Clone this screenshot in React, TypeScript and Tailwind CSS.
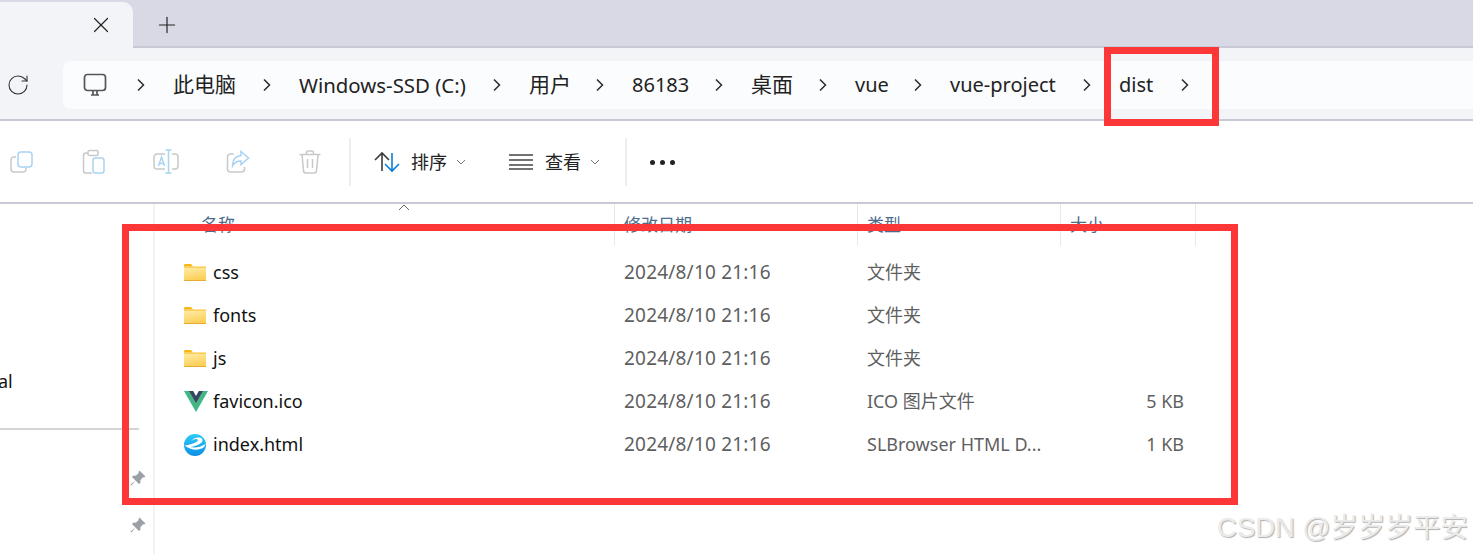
import { Plus, RotateCw, X } from 'lucide-react'

const ui = '[font-family:"Noto_Sans","Noto_Sans_CJK_SC",sans-serif]'

const crumbs = [
  { label: '此电脑', width: 'w-[116px]', size: 'text-[21px]' },
  { label: 'Windows-SSD (C:)', width: 'w-[220px]', size: 'text-[20.4px]' },
  { label: '用户', width: 'w-[93px]', size: 'text-[21px]' },
  { label: '86183', width: 'w-[109px]', size: 'text-[20px]' },
  { label: '桌面', width: 'w-[94px]', size: 'text-[21px]' },
  { label: 'vue', width: 'w-[85px]', size: 'text-[20px]' },
  { label: 'vue-project', width: 'w-[159px]', size: 'text-[20px]' },
  { label: 'dist', width: 'w-[88px]', size: 'text-[20px]' },
]

const files = [
  { name: 'css', icon: 'folder', type: '文件夹', size: '' },
  { name: 'fonts', icon: 'folder', type: '文件夹', size: '' },
  { name: 'js', icon: 'folder', type: '文件夹', size: '' },
  { name: 'favicon.ico', icon: 'vue', type: 'ICO 图片文件', size: '5 KB' },
  { name: 'index.html', icon: 'browser', type: 'SLBrowser HTML D...', size: '1 KB' },
]

function Chevron() {
  return (
    <svg width="10" height="14" viewBox="0 0 10 14" fill="none" stroke="#2b2b2b" strokeWidth="1.5">
      <path d="M2 1.5 7.5 7 2 12.5" />
    </svg>
  )
}

function SmallCaret() {
  return (
    <svg width="10" height="6" viewBox="0 0 10 6" fill="none" stroke="#777" strokeWidth="1">
      <path d="M1 1l4 4 4-4" />
    </svg>
  )
}

function PcIcon() {
  return (
    <svg width="24" height="24" viewBox="0 0 24 24" fill="none" stroke="#555" strokeWidth="1.7">
      <rect x="1.5" y="1.5" width="21" height="16" rx="3" />
      <path d="M8 22h8M10 18v4M14 18v4" />
    </svg>
  )
}

function CopyIcon() {
  return (
    <svg width="24" height="24" viewBox="0 0 24 24" fill="none" strokeWidth="1.5">
      <path d="M6 7H4a3 3 0 0 0-3 3v9a3 3 0 0 0 3 3h9a3 3 0 0 0 3-3v-1" stroke="#c9c9c9" />
      <rect x="8" y="2" width="14" height="15" rx="3" stroke="#a9d3f3" />
    </svg>
  )
}

function PasteIcon() {
  return (
    <svg width="24" height="26" viewBox="0 0 24 26" fill="none" strokeWidth="1.5">
      <path d="M6 4H4a2.500 2.500 0 0 0-2.500 2.500v15A2.500 2.500 0 0 0 4 24h6M17 4h-1" stroke="#c9c9c9" />
      <rect x="6" y="1.500" width="10" height="5" rx="1.500" stroke="#c9c9c9" />
      <rect x="11" y="9" width="11" height="15" rx="2.500" stroke="#a9d3f3" />
    </svg>
  )
}

function RenameIcon() {
  return (
    <svg width="26" height="26" viewBox="0 0 26 26" fill="none" strokeWidth="1.5">
      <path d="M12 5H4a3 3 0 0 0-3 3v9a3 3 0 0 0 3 3h8M19 5h3a3 3 0 0 1 3 3v9a3 3 0 0 1-3 3h-3" stroke="#c9c9c9" />
      <path d="M12.500 1h6M15.500 1v23M12.500 24h6M5.500 17l3-9 3 9M6.500 14.500h4" stroke="#a9d3f3" />
    </svg>
  )
}

function ShareIcon() {
  return (
    <svg width="24" height="24" viewBox="0 0 24 24" fill="none" strokeWidth="1.5">
      <path d="M8 4H4.500A3 3 0 0 0 1.500 7v12a3 3 0 0 0 3 3h11a3 3 0 0 0 3-3v-2" stroke="#c9c9c9" />
      <path d="M15 1.500 22.500 8 15 14.500V11c-4 0-6.500 1.500-8.500 5 0-6 3-10 8.500-10.500z" stroke="#a9d3f3" />
    </svg>
  )
}

function TrashIcon() {
  return (
    <svg width="22" height="24" viewBox="0 0 22 24" fill="none" stroke="#c9c9c9" strokeWidth="1.5">
      <path d="M0.500 4.500h21M7.500 4.500V3a2 2 0 0 1 2-2h3a2 2 0 0 1 2 2v1.500M3 4.500l1.500 16a2.500 2.500 0 0 0 2.500 2.500h8a2.500 2.500 0 0 0 2.500-2.500l1.500-16M8.500 9v9M13.500 9v9" />
    </svg>
  )
}

function SortIcon() {
  return (
    <svg width="26" height="22" viewBox="0 0 26 22" fill="none" strokeWidth="1.6">
      <path d="M8 20V2M1 9l7-7 7 7" stroke="#3d3d3d" />
      <path d="M18 2v18M11 13l7 7 7-7" stroke="#0a7fd6" />
    </svg>
  )
}

function ViewIcon() {
  return (
    <svg width="24" height="16" viewBox="0 0 24 16" fill="none" stroke="#444" strokeWidth="1.5">
      <path d="M0 1h24M0 6h24M0 11h24M0 15h24" />
    </svg>
  )
}

function PinIcon() {
  return (
    <svg width="16" height="16" viewBox="0 0 16 16" fill="#9aa0a6">
      <path d="M9.500 0.500 15.500 6.500 14 7.500 13 7.200 10.500 10 10.300 13 9 14 5.500 10.500 1.500 15.500 0.500 14.500 5.500 10.500 2 7 3 5.700 6 5.500 8.800 3 8.500 2z" />
    </svg>
  )
}

function FolderIcon() {
  return (
    <svg width="22" height="17" viewBox="0 0 22 17">
      <defs>
        <linearGradient id="folder-body" x1="0" y1="0" x2="0.3" y2="1">
          <stop offset="0" stopColor="#ffedab" />
          <stop offset="1" stopColor="#fccf57" />
        </linearGradient>
      </defs>
      <path d="M0 1a1 1 0 0 1 1-1h6l2 2.500H0z" fill="#fbb714" />
      <path d="M0 3h22v13a1 1 0 0 1-1 1H1a1 1 0 0 1-1-1z" fill="url(#folder-body)" />
      <path d="M0 2.500h22v1.200H0z" fill="#f8c538" />
      <path d="M0 16h22v1H0z" fill="#e8ac34" />
    </svg>
  )
}

function VueIcon() {
  return (
    <svg width="24" height="21" viewBox="0 0 24 21">
      <path d="M0 0h4.800L12 12.500 19.200 0H24L12 21z" fill="#41b883" />
      <path d="M4.800 0h4.400L12 5l2.800-5h4.400L12 12.500z" fill="#35495e" />
    </svg>
  )
}

function BrowserIcon() {
  return (
    <svg width="22" height="22" viewBox="0 0 22 22">
      <defs>
        <linearGradient id="browser-ball" x1="0" y1="0" x2="0" y2="1">
          <stop offset="0" stopColor="#2ccaf8" />
          <stop offset="1" stopColor="#0d8fe6" />
        </linearGradient>
      </defs>
      <circle cx="11" cy="11" r="11" fill="url(#browser-ball)" />
      <path d="M0.500 11.500C5 11 10 9.500 13 7.500c1.500-1 1-2.500-1-2.500-2 0-3.500 1-5 2.500 2-3 5-4.500 8.500-4 3 .5 4 3 2 5C15 11 10 12.500 6.500 13c4 1 9.500 .5 15-3-.5 1.500-1 2.500-2 3.500-5 3-11 3.500-19-2z" fill="#fff" />
    </svg>
  )
}

function FileIcon({ kind }: { kind: string }) {
  if (kind === 'vue') return <VueIcon />
  if (kind === 'browser') return <BrowserIcon />
  return <FolderIcon />
}

export default function App() {
  return (
    <div className={`relative h-[554px] w-[1473px] overflow-hidden bg-white ${ui}`}>
      {/* Вкладки */}
      <div className="flex h-[48px] items-stretch border-b-2 border-[#c9c9d6] bg-[#d8d9e5]">
        <div className="mt-[2px] -mb-[2px] flex w-[133px] items-center justify-end rounded-tr-[10px] bg-[#f3f4f8] pr-[19px]">
          <X size={26} strokeWidth={1.1} color="#222" />
        </div>
        <div className="ml-[21px] flex items-center pt-[4px]">
          <Plus size={26} strokeWidth={1.1} color="#222" />
        </div>
      </div>

      {/* Адресная строка */}
      <div className="flex h-[73px] items-center border-b-2 border-[#c9c9d6] bg-[#f3f4f8] pt-[3px]">
        <div className="ml-[6px] w-[57px]">
          <RotateCw size={24} strokeWidth={1.1} color="#333" />
        </div>
        <div className="flex h-[48px] w-[1410px] items-center rounded-l-[8px] bg-[#fbfcfe] pl-[20px] text-[#222]">
          <div className="w-[53px]">
            <PcIcon />
          </div>
          <Chevron />
          {crumbs.map((crumb) => (
            <div key={crumb.label} className="flex items-center">
              <span className={`${crumb.width} ${crumb.size} whitespace-nowrap pl-[27px]`}>{crumb.label}</span>
              <Chevron />
            </div>
          ))}
        </div>
      </div>

      {/* Панель инструментов */}
      <div className="flex h-[83px] items-center border-b-2 border-[#c9c9d6] bg-white pt-[1px] text-[18px] text-[#222]">
        <div className="-ml-[14px] flex items-center">
          <div className="flex w-[72px] justify-center"><CopyIcon /></div>
          <div className="flex w-[72px] justify-center"><PasteIcon /></div>
          <div className="flex w-[72px] justify-center"><RenameIcon /></div>
          <div className="flex w-[72px] justify-center"><ShareIcon /></div>
          <div className="flex w-[72px] justify-center"><TrashIcon /></div>
        </div>
        <div className="ml-[3px] h-[48px] w-[2px] bg-[#eeeeee]" />
        <div className="ml-[23px] flex items-center">
          <SortIcon />
          <span className="ml-[11px]">排序</span>
          <span className="ml-[9px]"><SmallCaret /></span>
        </div>
        <div className="ml-[43px] flex items-center">
          <ViewIcon />
          <span className="ml-[12px]">查看</span>
          <span className="ml-[9px]"><SmallCaret /></span>
        </div>
        <div className="ml-[25px] h-[48px] w-[2px] bg-[#eeeeee]" />
        <div className="ml-[23px] flex items-center gap-[5px]">
          <span className="h-[5px] w-[5px] rounded-full bg-[#222]" />
          <span className="h-[5px] w-[5px] rounded-full bg-[#222]" />
          <span className="h-[5px] w-[5px] rounded-full bg-[#222]" />
        </div>
      </div>

      <div className="flex">
        {/* Боковая панель */}
        <div className="h-[350px] w-[155px] shrink-0 overflow-hidden border-r-2 border-[#f3f3f3]">
          <div className="mt-[162px] -ml-[31px] whitespace-nowrap text-[18px] leading-[30px] text-[#111]">Local</div>
          <div className="mt-[32px] h-[2px] w-[139px] bg-[#d4d4d4]" />
          <div className="mt-[40px] flex flex-col items-end gap-[31px] pr-[7px]">
            <PinIcon />
            <PinIcon />
          </div>
        </div>

        {/* Список файлов */}
        <div className="flex-1">
          <div className="grid h-[39px] grid-cols-[460px_243px_203px_135px] text-[17px] leading-[42px] text-[#4d6b8a]">
            <div className="relative border-r border-[#e8e8e8] pl-[46px]">
              名称
              <svg className="absolute left-[243px] top-[0px]" width="12" height="7" viewBox="0 0 12 7" fill="none" stroke="#666" strokeWidth="1">
                <path d="M1 6l5-5 5 5" />
              </svg>
            </div>
            <div className="border-r border-[#e8e8e8] pl-[9px]">修改日期</div>
            <div className="border-r border-[#e8e8e8] pl-[9px]">类型</div>
            <div className="border-r border-[#e8e8e8] pl-[9px]">大小</div>
          </div>
          <div className="mt-[8px]">
            {files.map((file) => (
              <div key={file.name} className="grid h-[43px] grid-cols-[459px_243px_203px_124px] items-center text-[18px]">
                <div className="flex items-center pl-[29px] text-[#111]">
                  <div className="flex w-[29px] justify-start"><FileIcon kind={file.icon} /></div>
                  <span>{file.name}</span>
                </div>
                <div className="pl-[10px] text-[19px] tracking-[0.2px] text-[#5f5f5f]">2024/8/10 21:16</div>
                <div className="whitespace-nowrap pl-[10px] text-[#5f5f5f]">{file.type}</div>
                <div className="text-right text-[#5f5f5f]">{file.size}</div>
              </div>
            ))}
          </div>
        </div>
      </div>

      {/* Красные рамки поверх скриншота */}
      <div className="absolute left-[1104px] top-[47px] h-[79px] w-[115px] border-[7px] border-[#fd3737]" />
      <div className="absolute left-[122px] top-[224px] h-[281px] w-[1116px] border-[7px] border-[#fd3737]" />

      {/* Водяной знак */}
      <div className="absolute right-[5px] top-[510px] whitespace-nowrap text-[27.500px] leading-[36px] text-[#ebebeb] [font-family:'Liberation_Sans','Noto_Sans_CJK_SC',sans-serif] [text-shadow:1px_1px_1px_#b0b0b0]">
        CSDN @岁岁岁平安
      </div>
    </div>
  )
}
